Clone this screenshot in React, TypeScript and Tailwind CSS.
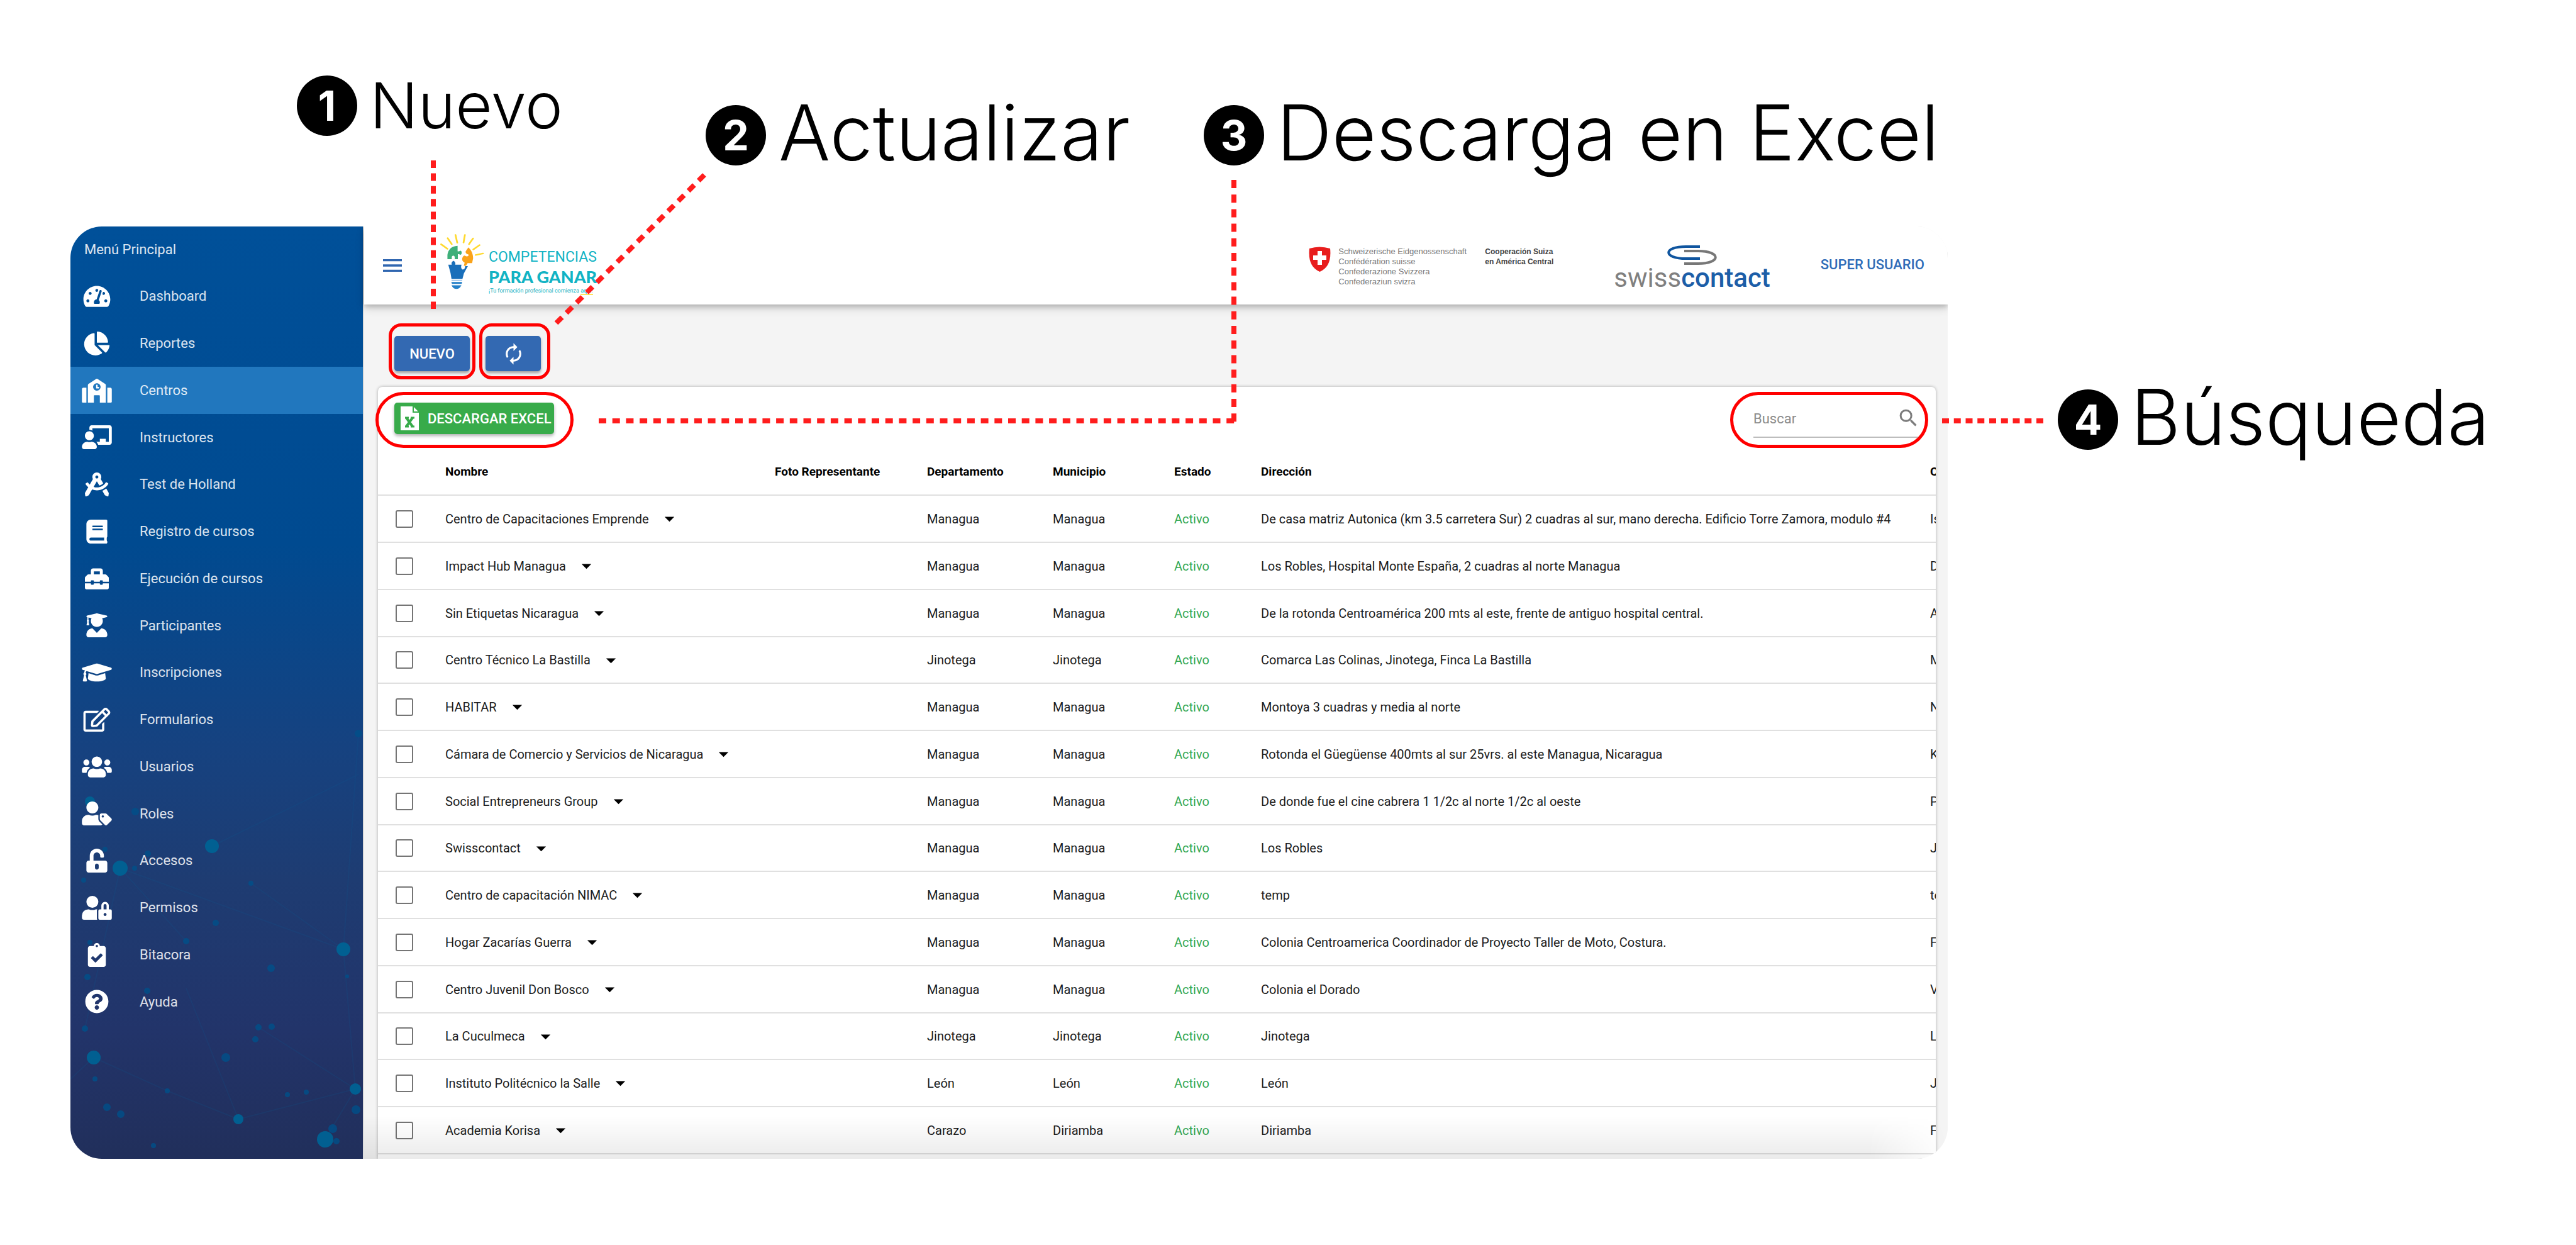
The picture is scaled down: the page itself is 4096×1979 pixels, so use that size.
import type { ReactNode } from "react";
import type { IconType } from "react-icons";
import {
  FaBook,
  FaChalkboardTeacher,
  FaChartPie,
  FaClipboardCheck,
  FaDraftingCompass,
  FaGraduationCap,
  FaQuestionCircle,
  FaRegEdit,
  FaSchool,
  FaTachometerAlt,
  FaToolbox,
  FaUnlockAlt,
  FaUserGraduate,
  FaUserLock,
  FaUsers,
  FaUserTag,
} from "react-icons/fa";
import { MdArrowDropDown, MdAutorenew, MdMenu, MdSearch } from "react-icons/md";

const MENU: { label: string; icon: IconType; active?: boolean }[] = [
  { label: "Dashboard", icon: FaTachometerAlt },
  { label: "Reportes", icon: FaChartPie },
  { label: "Centros", icon: FaSchool, active: true },
  { label: "Instructores", icon: FaChalkboardTeacher },
  { label: "Test de Holland", icon: FaDraftingCompass },
  { label: "Registro de cursos", icon: FaBook },
  { label: "Ejecución de cursos", icon: FaToolbox },
  { label: "Participantes", icon: FaUserGraduate },
  { label: "Inscripciones", icon: FaGraduationCap },
  { label: "Formularios", icon: FaRegEdit },
  { label: "Usuarios", icon: FaUsers },
  { label: "Roles", icon: FaUserTag },
  { label: "Accesos", icon: FaUnlockAlt },
  { label: "Permisos", icon: FaUserLock },
  { label: "Bitacora", icon: FaClipboardCheck },
  { label: "Ayuda", icon: FaQuestionCircle },
];

const CENTERS: [string, string, string, string, string][] = [
  ["Centro de Capacitaciones Emprende", "Managua", "Managua", "De casa matriz Autonica (km 3.5 carretera Sur) 2 cuadras al sur, mano derecha. Edificio Torre Zamora, modulo #4", "Is"],
  ["Impact Hub Managua", "Managua", "Managua", "Los Robles, Hospital Monte España, 2 cuadras al norte Managua", "D"],
  ["Sin Etiquetas Nicaragua", "Managua", "Managua", "De la rotonda Centroamérica 200 mts al este, frente de antiguo hospital central.", "A"],
  ["Centro Técnico La Bastilla", "Jinotega", "Jinotega", "Comarca Las Colinas, Jinotega, Finca La Bastilla", "M"],
  ["HABITAR", "Managua", "Managua", "Montoya 3 cuadras y media al norte", "N"],
  ["Cámara de Comercio y Servicios de Nicaragua", "Managua", "Managua", "Rotonda el Güegüense 400mts al sur 25vrs. al este Managua, Nicaragua", "K"],
  ["Social Entrepreneurs Group", "Managua", "Managua", "De donde fue el cine cabrera 1 1/2c al norte 1/2c al oeste", "P"],
  ["Swisscontact", "Managua", "Managua", "Los Robles", "J"],
  ["Centro de capacitación NIMAC", "Managua", "Managua", "temp", "te"],
  ["Hogar Zacarías Guerra", "Managua", "Managua", "Colonia Centroamerica Coordinador de Proyecto Taller de Moto, Costura.", "F"],
  ["Centro Juvenil Don Bosco", "Managua", "Managua", "Colonia el Dorado", "V"],
  ["La Cuculmeca", "Jinotega", "Jinotega", "Jinotega", "L"],
  ["Instituto Politécnico la Salle", "León", "León", "León", "J"],
  ["Academia Korisa", "Carazo", "Diriamba", "Diriamba", "F"],
];

const DOTS: [number, number, number][] = [
  [458, 185, 6], [31, 293, 8], [103, 309, 6], [225, 364, 11], [55, 369, 4], [123, 376, 5],
  [79, 399, 12], [102, 399, 4], [21, 418, 4], [287, 423, 4], [231, 486, 5], [184, 515, 5],
  [31, 517, 4], [434, 528, 11], [319, 558, 6], [440, 571, 3], [27, 572, 5], [122, 594, 5],
  [23, 654, 5], [299, 652, 5], [320, 651, 5], [294, 671, 5], [37, 700, 11], [247, 700, 7],
  [39, 734, 4], [453, 750, 9], [154, 753, 4], [345, 759, 4], [375, 755, 4], [58, 779, 6],
  [454, 783, 7], [80, 790, 6], [267, 798, 8], [417, 813, 7], [405, 830, 13], [423, 833, 5],
  [132, 840, 4],
];

function Network() {
  return (
    <svg viewBox="0 0 465 861" className="pointer-events-none absolute bottom-0 left-0 h-[861px] w-[465px]" aria-hidden="true">
      <g stroke="#0f5f94" strokeWidth="2" strokeOpacity="0.16" fill="none">
        <path d="M79 399 L434 528 M79 399 L184 515 M79 399 L23 654 M434 528 L458 185 M434 528 L453 750 M225 364 L458 250 M287 423 L434 528" />
        <path d="M37 700 L154 753 L267 798 M184 590 L267 798 M299 652 L453 750 M267 798 L453 750 M405 830 L453 750 M37 700 L0 734" />
      </g>
      {DOTS.map(([x, y, r]) => (
        <circle key={`${x}-${y}`} cx={x} cy={y} r={r} fill={r > 7 ? "#006294" : "#00508a"} fillOpacity={r > 7 ? 0.95 : 0.8} />
      ))}
    </svg>
  );
}

function Sidebar() {
  return (
    <nav className="relative w-[465px] shrink-0 overflow-hidden bg-[linear-gradient(180deg,#005099_0%,#004a90_34%,#164280_56%,#1e3c72_70%,#22346a_86%,#212f5b_100%)] text-[22px] text-white/85">
      <Network />
      <div className="relative flex h-[73px] items-center pl-[22px]">Menú Principal</div>
      <ul className="relative">
        {MENU.map(({ label, icon: Icon, active }) => (
          <li key={label} className="h-[75px] nth-[4n]:h-[74px]">
            <a href="#" className={active ? "flex h-full items-center bg-[#2177be]" : "flex h-full items-center"}>
              <span className="flex w-[84px] justify-center text-white">
                <Icon className="h-[38px] w-[48px]" />
              </span>
              <span className="pl-[26px]">{label}</span>
            </a>
          </li>
        ))}
      </ul>
    </nav>
  );
}

function BulbLogo() {
  return (
    <svg viewBox="145 120 355 510" preserveAspectRatio="none" className="h-[88px] w-[70px]" aria-hidden="true">
      <path
        d="M152 214 L203 256 M205 158 L238 213 M268 128 L282 200 M344 128 L333 198 M410 160 L377 213 M462 222 L412 262 M490 299 L430 313"
        stroke="#ffd92e"
        strokeWidth="14"
        strokeLinecap="round"
      />
      <path d="M203 352 V312 C208 265 235 230 285 228 V280 H298 C306 266 320 276 318 294 C318 310 306 318 298 306 H287 V352 H262 V328 Q250 310 238 328 V352 Z" fill="#3eb07a" />
      <path d="M372 243 C396 268 410 300 410 345 L402 388 H366 L352 412 H335 L342 384 C322 372 316 350 328 328 Q336 312 352 324 Q374 330 374 310 Q346 302 350 280 Z" fill="#faa31a" />
      <path d="M210 403 H238 Q230 378 252 366 Q272 378 266 403 H316 Q308 438 326 448 Q346 446 346 416 H368 L336 482 L324 535 H236 L228 480 Z" fill="#1a6fba" />
      <path d="M236 548 H322" stroke="#7db0e0" strokeWidth="8" />
      <path d="M234 562 H322 L318 580 H240 Z M236 592 H316 Q300 626 276 626 Q250 626 236 592 Z" fill="#2380c8" />
    </svg>
  );
}

function SwissShield() {
  return (
    <svg viewBox="0 0 35 40" className="h-[40px] w-[35px]" aria-hidden="true">
      <path d="M1 3 Q17 -2 34 3 Q37 32 17.500 40 Q-2 32 1 3 Z" fill="#e81d1d" />
      <path d="M14 7 H21 V14 H28 V21 H21 V29 H14 V21 H7 V14 H14 Z" fill="#fff" />
    </svg>
  );
}

function TopBar() {
  return (
    <header className="relative z-10 flex h-[124px] items-start bg-white pr-[37px] pl-[25px] shadow-[0_3px_8px_rgba(0,0,0,0.2),0_6px_14px_rgba(0,0,0,0.14)]">
      <button type="button" aria-label="Abrir menú" className="mt-[42px] text-[40px] text-[#2f66b0]">
        <MdMenu />
      </button>
      <a href="#" className="mt-[12px] ml-[56px] flex items-start gap-[7px] text-[#12b3c4]">
        <BulbLogo />
        <span className="block pt-[22px]">
          <span className="block text-[23px] leading-[30px]">COMPETENCIAS</span>
          <span className="block font-['Lato'] text-[27px] leading-[32px] font-black">PARA GANAR</span>
          <span className="block text-[9px] leading-[12px]">
            ¡Tu formación profesional comienza <span className="border-b-2 border-[#ffe45c]">aquí!</span>
          </span>
        </span>
      </a>
      <div className="mt-[32px] ml-auto flex items-start font-['Liberation_Sans'] text-[13px] leading-[16px]">
        <SwissShield />
        <p className="w-[245px] pl-[12px] text-[#777]">
          Schweizerische Eidgenossenschaft
          <br />
          Confédération suisse
          <br />
          Confederazione Svizzera
          <br />
          Confederaziun svizra
        </p>
        <p className="w-[205px] text-[12px] font-bold whitespace-nowrap text-[#444]">
          Cooperación Suiza
          <br />
          en América Central
        </p>
      </div>
      <div className="mt-[28px] flex flex-col items-center">
        <svg viewBox="0 0 79 34" className="h-[34px] w-[79px]" fill="none" aria-hidden="true">
          <path d="M52 4 H30 C-7 4 -7 23 30 23 H52" stroke="#0f559f" strokeWidth="4" />
          <path d="M27 11 H49 C86 11 86 31 49 31 H27" stroke="#777" strokeWidth="4" />
        </svg>
        <div className="text-[42px] leading-[40px] text-[#808080]">
          swiss<span className="font-medium text-[#1c5ea8]">contact</span>
        </div>
      </div>
      <button type="button" className="mt-[47px] ml-[80px] text-[22px] leading-[28px] font-medium text-[#2f6cb8]">
        SUPER USUARIO
      </button>
    </header>
  );
}

function ExcelIcon() {
  return (
    <svg viewBox="0 0 29 38" className="h-[38px] w-[29px]" aria-hidden="true">
      <path d="M0 0 H19 V10 H29 V38 H0 Z M21 1 L28 8 H21 Z" fill="#fff" />
      <path d="M9 18 L19 32 M19 18 L9 32" stroke="#38ab4a" strokeWidth="4" />
      <path d="M7 18 H13 M16 18 H22 M7 32 H13 M16 32 H22" stroke="#38ab4a" strokeWidth="3" />
    </svg>
  );
}

function Toolbar() {
  return (
    <div className="flex gap-[25px] pt-[50px] pb-[25px] pl-[26px]">
      <div className="relative">
        <button type="button" className="h-[56px] w-[120px] rounded-[5px] bg-[#3369b2] text-[22px] font-medium text-white shadow-[0_3px_4px_rgba(0,0,0,0.35)]">
          NUEVO
        </button>
        <div className="pointer-events-none absolute -inset-x-[9px] -top-[20px] -bottom-[13px] rounded-[20px] border-[5px] border-[#ff0000]" />
      </div>
      <div className="relative">
        <button
          type="button"
          aria-label="Actualizar"
          className="flex h-[56px] w-[88px] items-center justify-center rounded-[5px] bg-[#3369b2] text-[37px] text-white shadow-[0_3px_4px_rgba(0,0,0,0.35)]"
        >
          <MdAutorenew />
        </button>
        <div className="pointer-events-none absolute -top-[20px] -right-[15px] -bottom-[13px] -left-[10px] rounded-[20px] border-[5px] border-[#ff0000]" />
      </div>
    </div>
  );
}

function CardHeader() {
  return (
    <div className="flex h-[99px] items-start justify-between pt-[25px] pr-[25px] pl-[26px]">
      <div className="relative">
        <button type="button" className="flex h-[50px] w-[254px] items-center gap-[14px] rounded-[5px] bg-[#38ab4a] pl-[10px] text-[22px] font-medium whitespace-nowrap text-white shadow-[0_3px_5px_rgba(0,0,0,0.3)]">
          <ExcelIcon />
          DESCARGAR EXCEL
        </button>
        <div className="pointer-events-none absolute -top-[17px] -right-[31px] -bottom-[22px] -left-[30px] rounded-full border-[5px] border-[#ff0000]" />
      </div>
      <div className="relative">
        <label className="flex h-[56px] w-[265px] items-start justify-between border-b-2 border-[#bdbdbd] text-[#7c7c7c]">
          <input type="search" placeholder="Buscar" aria-label="Buscar" className="h-[50px] w-[180px] bg-transparent text-[22px] outline-none placeholder:text-[#8c8c8c]" />
          <MdSearch className="mt-[6px] text-[37px]" />
        </label>
        <div className="pointer-events-none absolute -top-[17px] -right-[13px] -bottom-[16px] -left-[37px] rounded-full border-[5px] border-[#ff0000]" />
      </div>
    </div>
  );
}

function CentersTable() {
  return (
    <table className="w-full table-fixed border-collapse text-left text-[20px] whitespace-nowrap text-[#1c1c1c]">
      <colgroup>
        <col className="w-[107px]" />
        <col className="w-[524px]" />
        <col className="w-[242px]" />
        <col className="w-[200px]" />
        <col className="w-[193px]" />
        <col className="w-[138px]" />
        <col />
        <col className="w-[9px]" />
      </colgroup>
      <thead>
        <tr className="h-[73px] border-b-2 border-[#e0e0e0] text-[19px] text-black">
          <th aria-label="Selección" />
          <th>Nombre</th>
          <th>Foto Representante</th>
          <th>Departamento</th>
          <th>Municipio</th>
          <th>Estado</th>
          <th>Dirección</th>
          <th className="overflow-hidden">C</th>
        </tr>
      </thead>
      <tbody>
        {CENTERS.map(([name, department, town, address, contact]) => (
          <tr key={name} className="h-[75px] border-b-2 border-[#e0e0e0] nth-[4n]:h-[74px]">
            <td className="pl-[28px]">
              <input type="checkbox" aria-label={name} className="block size-[28px] appearance-none rounded-[3px] border-2 border-[#757575]" />
            </td>
            <td>
              <div className="flex items-center gap-[14px]">
                {name}
                <button type="button" aria-label={`Opciones de ${name}`} className="text-[37px] text-black">
                  <MdArrowDropDown />
                </button>
              </div>
            </td>
            <td />
            <td>{department}</td>
            <td>{town}</td>
            <td className="text-[#35a853]">Activo</td>
            <td>{address}</td>
            <td className="overflow-hidden">{contact}</td>
          </tr>
        ))}
      </tbody>
    </table>
  );
}

function Callout({ number, children, className, size }: { number: number; children: ReactNode; className?: string; size: string }) {
  return (
    <div className={`flex items-center gap-[20px] ${className ?? ""}`}>
      <span className="flex size-[96px] shrink-0 items-center justify-center rounded-full bg-black text-[66px] leading-none font-bold text-white">{number}</span>
      <span className={`leading-none font-light whitespace-nowrap ${size}`}>{children}</span>
    </div>
  );
}

export default function App() {
  return (
    <div className="relative min-h-screen overflow-hidden bg-white font-['Roboto',sans-serif]">
      <div className="grid h-[360px] grid-cols-[650px_792px_1fr] items-start pl-[472px] font-['Inter',sans-serif] text-black">
        <Callout number={1} className="mt-[117px]" size="text-[101px]">
          Nuevo
        </Callout>
        <Callout number={2} className="mt-[150px]" size="pb-2 text-[122px]">
          Actualizar
        </Callout>
        <Callout number={3} className="mt-[150px]" size="pb-2 text-[122px]">
          Descarga en Excel
        </Callout>
      </div>

      <div className="flex pl-[112px]">
        <div className="relative flex flex-1 overflow-hidden rounded-[50px]">
          <Sidebar />
          <div className="min-w-0 flex-1 border-l-2 border-[#dcdcdc] bg-[#f4f4f4]">
            <TopBar />
            <main className="pr-[19px] pl-[22px]">
              <Toolbar />
              <section className="rounded-t-[7px] bg-white pb-[7px] shadow-[0_0_5px_rgba(0,0,0,0.3)]">
                <CardHeader />
                <CentersTable />
              </section>
            </main>
          </div>
          <div className="pointer-events-none absolute right-0 bottom-0 left-[467px] h-[68px] bg-linear-to-b from-transparent to-black/8 mask-r-from-95%" />
        </div>

        <div className="w-[999px] shrink-0 pt-[242px] pl-[175px] font-['Inter',sans-serif] text-black">
          <div className="relative">
            <Callout number={4} size="pb-2 text-[122px]">
              Búsqueda
            </Callout>
            <svg className="pointer-events-none absolute top-[63px] -left-[184px] h-[8px] w-[162px]" aria-hidden="true">
              <path d="M0 4 H161" stroke="#ff1d1d" strokeWidth="8" strokeDasharray="11 7.75" />
            </svg>
          </div>
        </div>
      </div>

      <svg className="pointer-events-none absolute top-0 left-0 z-20 h-[720px] w-[2000px]" fill="none" stroke="#ff1d1d" strokeWidth="8" aria-hidden="true">
        <path d="M689 255 V491" strokeDasharray="12 8.400" />
        <path d="M1120 278 L884 514" strokeDasharray="13 9.860" />
        <path d="M1962 286 V673" strokeDasharray="13 10.200" />
        <path d="M952 669 H1966" strokeDasharray="12 9.700" />
      </svg>
    </div>
  );
}
